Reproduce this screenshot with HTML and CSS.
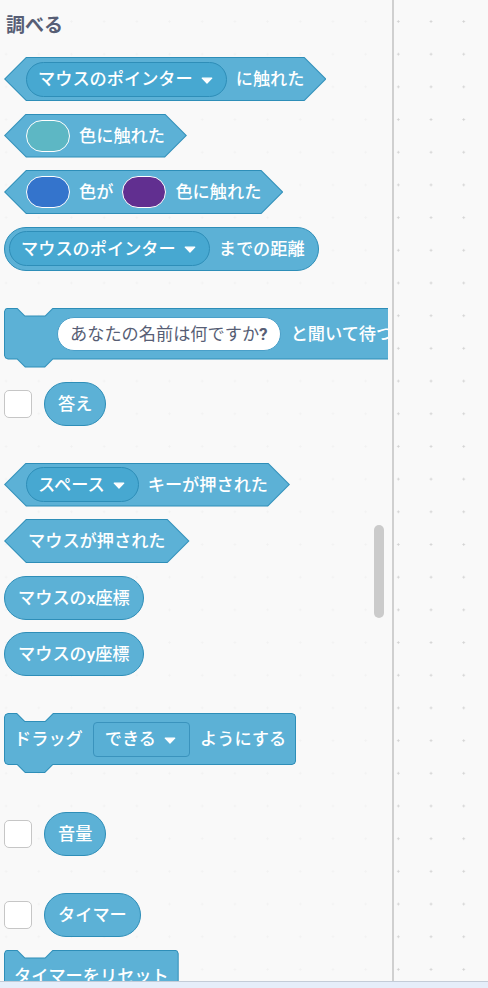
FILE: index.html
```html
<!DOCTYPE html>
<html lang="ja">
<head>
<meta charset="utf-8">
<title>調べる</title>
<link rel="stylesheet" href="styles.css">
</head>
<body>
<div class="app">
  <div class="main">
    <div class="flyout">
      <div class="flyout-clip">
        <div class="label">調べる</div>

        <div class="bool first">
          <span class="dd"><span class="t">マウスのポインター</span><svg class="caret" viewBox="0 0 12 7" width="12" height="7"><path d="M1.2 1.2h9.6L6 6.2z" fill="#fff" stroke="#fff" stroke-width="1.2" stroke-linejoin="round"/></svg></span>
          <span class="t">に触れた</span>
        </div>

        <div class="bool">
          <span class="swatch swatch--teal"></span>
          <span class="t">色に触れた</span>
        </div>

        <div class="bool">
          <span class="swatch swatch--blue"></span>
          <span class="t">色が</span>
          <span class="swatch swatch--purple"></span>
          <span class="t">色に触れた</span>
        </div>

        <div class="rep rep--drop">
          <span class="dd"><span class="t">マウスのポインター</span><svg class="caret" viewBox="0 0 12 7" width="12" height="7"><path d="M1.2 1.2h9.6L6 6.2z" fill="#fff" stroke="#fff" stroke-width="1.2" stroke-linejoin="round"/></svg></span>
          <span class="t">までの距離</span>
        </div>

        <div class="cmd cmd--ask sep">
          <span class="input">あなたの名前は何ですか<b class="q">?</b></span>
          <span class="t">と聞いて待つ</span>
        </div>

        <div class="row after-cmd">
          <span class="check"></span>
          <div class="rep"><span class="t">答え</span></div>
        </div>

        <div class="bool sep">
          <span class="dd"><span class="t">スペース</span><svg class="caret" viewBox="0 0 12 7" width="12" height="7"><path d="M1.2 1.2h9.6L6 6.2z" fill="#fff" stroke="#fff" stroke-width="1.2" stroke-linejoin="round"/></svg></span>
          <span class="t">キーが押された</span>
        </div>

        <div class="bool bool--text">
          <span class="t">マウスが押された</span>
        </div>

        <div class="rep"><span class="t">マウスのx座標</span></div>
        <div class="rep"><span class="t">マウスのy座標</span></div>

        <div class="cmd sep">
          <span class="t">ドラッグ</span>
          <span class="dd-sq"><span class="t">できる</span><svg class="caret" viewBox="0 0 12 7" width="12" height="7"><path d="M1.2 1.2h9.6L6 6.2z" fill="#fff" stroke="#fff" stroke-width="1.2" stroke-linejoin="round"/></svg></span>
          <span class="t">ようにする</span>
        </div>

        <div class="row sep-after-cmd">
          <span class="check"></span>
          <div class="rep"><span class="t">音量</span></div>
        </div>

        <div class="row sep">
          <span class="check"></span>
          <div class="rep"><span class="t">タイマー</span></div>
        </div>

        <div class="cmd">
          <span class="t">タイマーをリセット</span>
        </div>
      </div>
      <div class="scrollbar"></div>
    </div>
    <div class="divider"></div>
    <div class="workspace"></div>
  </div>
  <div class="bottom"></div>
</div>
</body>
</html>
```

FILE: styles.css
```css
html, body {
  margin: 0;
  padding: 0;
}

body {
  width: 488px;
  height: 988px;
  overflow: hidden;
  font-family: "Roboto", "Noto Sans CJK JP", sans-serif;
  background-color: #f9f9f9;
  background-image: radial-gradient(circle, #d2d2d2 0.9px, rgba(210, 210, 210, 0) 1.3px);
  background-size: 32.7px 32.7px;
  background-position: 22.45px 5.15px;
}

.app {
  display: flex;
  flex-direction: column;
  height: 988px;
}

.main {
  display: flex;
  height: 981px;
  flex: none;
}

.flyout {
  position: relative;
  width: 392px;
  flex: none;
  background: rgba(249, 249, 249, 0.82);
}

.flyout-clip {
  width: 388px;
  height: 100%;
  box-sizing: border-box;
  padding-left: 4px;
  overflow: hidden;
  display: flex;
  flex-direction: column;
  align-items: flex-start;
}

.label {
  padding: 14px 0 0 2px;
  line-height: 24px;
  font-size: 19px;
  font-weight: 700;
  color: #575e75;
  white-space: nowrap;
}

.flyout-clip > * + * {
  margin-top: 12.5px;
}

.flyout-clip > .first {
  margin-top: 19px;
}

.flyout-clip > .sep {
  margin-top: 37px;
}

.flyout-clip > .after-cmd {
  margin-top: 22px;
}

.flyout-clip > .sep-after-cmd {
  margin-top: 47px;
}

.t {
  font-size: 17.2px;
  line-height: 20px;
  font-weight: 500;
  color: #fff;
  white-space: nowrap;
  flex: none;
}

/* boolean hexagon block */
.bool {
  position: relative;
  isolation: isolate;
  display: flex;
  align-items: center;
  flex: none;
  height: 44px;
  box-sizing: border-box;
  padding: 0 22px;
  gap: 9px;
}

.bool--text {
  padding: 0 24px;
}

.bool::before,
.bool::after {
  content: "";
  position: absolute;
  z-index: -1;
}

.bool::before {
  inset: 0;
  background: #2e8eb8;
  clip-path: polygon(0 50%, 22px 0, calc(100% - 22px) 0, 100% 50%, calc(100% - 22px) 100%, 22px 100%);
}

.bool::after {
  inset: 1px 1.4px;
  background: #5cb1d6;
  clip-path: polygon(0 50%, 21px 0, calc(100% - 21px) 0, 100% 50%, calc(100% - 21px) 100%, 21px 100%);
}

/* reporter pill */
.rep {
  display: flex;
  align-items: center;
  flex: none;
  height: 44px;
  box-sizing: border-box;
  border: 1px solid #2e8eb8;
  border-radius: 22px;
  background: #5cb1d6;
  padding: 0 13px;
  gap: 9px;
}

.rep--drop {
  padding-left: 4px;
}

/* command stack block */
.cmd {
  position: relative;
  isolation: isolate;
  display: flex;
  align-items: center;
  flex: none;
  height: 52px;
  box-sizing: border-box;
  padding: 0 10px;
  gap: 10px;
}

.cmd--ask {
  padding-left: 53px;
}

.cmd::before,
.cmd::after {
  content: "";
  position: absolute;
  z-index: -1;
}

.cmd::before {
  inset: 0 0 -8px 0;
  background: #2e8eb8;
  clip-path: polygon(0 4px, 1.2px 1.2px, 4px 0, 13px 0, 21px 8px, 41px 8px, 49px 0, calc(100% - 4px) 0, calc(100% - 1.2px) 1.2px, 100% 4px, 100% calc(100% - 12px), calc(100% - 1.2px) calc(100% - 9.2px), calc(100% - 4px) calc(100% - 8px), 49px calc(100% - 8px), 41px 100%, 21px 100%, 13px calc(100% - 8px), 4px calc(100% - 8px), 1.2px calc(100% - 9.2px), 0 calc(100% - 12px));
}

.cmd::after {
  inset: 1px 1px -7px 1px;
  background: #5cb1d6;
  clip-path: polygon(0 3px, 0.9px 0.9px, 3px 0, 11.6px 0, 19.6px 8px, 40.4px 8px, 48.4px 0, calc(100% - 3px) 0, calc(100% - 0.9px) 0.9px, 100% 3px, 100% calc(100% - 11px), calc(100% - 0.9px) calc(100% - 8.9px), calc(100% - 3px) calc(100% - 8px), 47.6px calc(100% - 8px), 39.6px 100%, 20.4px 100%, 12.4px calc(100% - 8px), 3px calc(100% - 8px), 0.9px calc(100% - 8.9px), 0 calc(100% - 11px));
}

/* dropdowns */
.dd {
  display: flex;
  align-items: center;
  flex: none;
  height: 35px;
  box-sizing: border-box;
  border: 1px solid #2e8eb8;
  border-radius: 18px;
  background: #47a8d1;
  padding: 0 13px 0 11px;
  gap: 8px;
}

.dd-sq {
  display: flex;
  align-items: center;
  flex: none;
  height: 35px;
  box-sizing: border-box;
  border: 1px solid #3a93bd;
  border-radius: 4px;
  background: #58afd5;
  padding: 0 13px 0 11px;
  gap: 8px;
}

.caret {
  display: block;
  flex: none;
  margin-top: 2px;
}

/* colour swatches */
.swatch {
  display: block;
  flex: none;
  width: 44px;
  height: 32px;
  box-sizing: border-box;
  border: 1px solid #fff;
  border-radius: 16px;
}

.swatch--teal {
  background: #5db7c4;
}

.swatch--blue {
  background: #3474cc;
}

.swatch--purple {
  background: #612f90;
}

/* text input */
.input {
  display: flex;
  align-items: center;
  flex: none;
  height: 34px;
  box-sizing: border-box;
  border: 1px solid #4a9fc8;
  border-radius: 17px;
  background: #fff;
  padding: 0 12px;
  font-size: 17.2px;
  line-height: 20px;
  font-weight: 400;
  color: #575e75;
  white-space: nowrap;
}

.q {
  font-weight: 700;
}

/* checkbox rows */
.row {
  display: flex;
  align-items: center;
  flex: none;
  gap: 12px;
}

.check {
  display: block;
  flex: none;
  width: 28px;
  height: 28px;
  box-sizing: border-box;
  border: 1px solid #c6c6c6;
  border-radius: 5px;
  background: #fff;
}

.scrollbar {
  position: absolute;
  left: 374px;
  top: 525px;
  width: 10px;
  height: 93px;
  border-radius: 5px;
  background: #cbcbcb;
}

.divider {
  width: 2px;
  flex: none;
  background: #d0d0d0;
}

.workspace {
  flex: 1;
}

.bottom {
  flex: 1;
  border-top: 1px solid #c4ccd8;
  background: #e6eefa;
}
```
